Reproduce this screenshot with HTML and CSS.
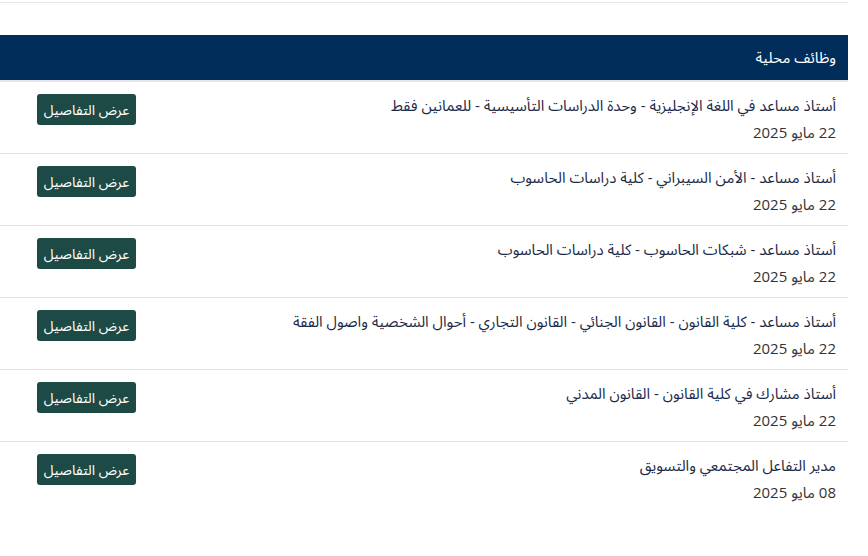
FILE: index.html
```html
<!DOCTYPE html>
<html lang="ar" dir="rtl">
<head>
  <meta charset="UTF-8">
  <meta name="viewport" content="width=device-width, initial-scale=1.0">
  <title>وظائف محلية</title>
  <link rel="stylesheet" href="styles.css">
</head>
<body>
  <div class="page">
    <div class="top-rule"></div>
    <div class="jobs-box">
      <h2 class="jobs-title">وظائف محلية</h2>
      <ul class="jobs-list">
        <li class="job">
          <div class="job-info">
            <p class="job-name">أستاذ مساعد في اللغة الإنجليزية - وحدة الدراسات التأسيسية - للعمانين فقط</p>
            <p class="job-date">22 مايو 2025</p>
          </div>
          <a href="#" class="details-btn">عرض التفاصيل</a>
        </li>
        <li class="job">
          <div class="job-info">
            <p class="job-name">أستاذ مساعد - الأمن السيبراني - كلية دراسات الحاسوب</p>
            <p class="job-date">22 مايو 2025</p>
          </div>
          <a href="#" class="details-btn">عرض التفاصيل</a>
        </li>
        <li class="job">
          <div class="job-info">
            <p class="job-name">أستاذ مساعد - شبكات الحاسوب - كلية دراسات الحاسوب</p>
            <p class="job-date">22 مايو 2025</p>
          </div>
          <a href="#" class="details-btn">عرض التفاصيل</a>
        </li>
        <li class="job">
          <div class="job-info">
            <p class="job-name">أستاذ مساعد - كلية القانون - القانون الجنائي - القانون التجاري - أحوال الشخصية واصول الفقة</p>
            <p class="job-date">22 مايو 2025</p>
          </div>
          <a href="#" class="details-btn">عرض التفاصيل</a>
        </li>
        <li class="job">
          <div class="job-info">
            <p class="job-name">أستاذ مشارك في كلية القانون - القانون المدني</p>
            <p class="job-date">22 مايو 2025</p>
          </div>
          <a href="#" class="details-btn">عرض التفاصيل</a>
        </li>
        <li class="job">
          <div class="job-info">
            <p class="job-name">مدير التفاعل المجتمعي والتسويق</p>
            <p class="job-date">08 مايو 2025</p>
          </div>
          <a href="#" class="details-btn">عرض التفاصيل</a>
        </li>
      </ul>
    </div>
  </div>
</body>
</html>
```

FILE: styles.css
```css
* {
  box-sizing: border-box;
  margin: 0;
  padding: 0;
  font-family: 'Open Sans', 'Noto Sans Arabic', 'DejaVu Sans', sans-serif;
}

body {
  background: #fff;
}

.page {
  width: 848px;
  margin-left: 0;
  margin-right: auto;
  padding-top: 2px;
}

.top-rule {
  border-top: 1px solid #e6e6e6;
}

.jobs-box {
  margin-top: 32px;
}

.jobs-title {
  background-color: #012d5a;
  color: #fff;
  font-size: 15px;
  font-weight: normal;
  height: 47px;
  line-height: 45px;
  padding: 0 12px;
  border-bottom: 2px solid #e3e6ea;
}

.jobs-list {
  list-style: none;
}

.job {
  display: flex;
  justify-content: space-between;
  align-items: flex-start;
  height: 72px;
  padding: 10px 12px 0 37px;
  border-bottom: 1px solid #e2e2e2;
}

.job:last-child {
  border-bottom: none;
}

.job-name {
  color: #1c2a48;
  font-size: 15px;
  line-height: 27px;
}

.job-date {
  color: #333;
  font-size: 15px;
  line-height: 27px;
}

.details-btn {
  display: block;
  margin-top: 2px;
  width: 99px;
  height: 31px;
  line-height: 31px;
  text-align: center;
  background-color: #1d4a45;
  color: #fff;
  font-size: 14px;
  border-radius: 3px;
  text-decoration: none;
}
```
